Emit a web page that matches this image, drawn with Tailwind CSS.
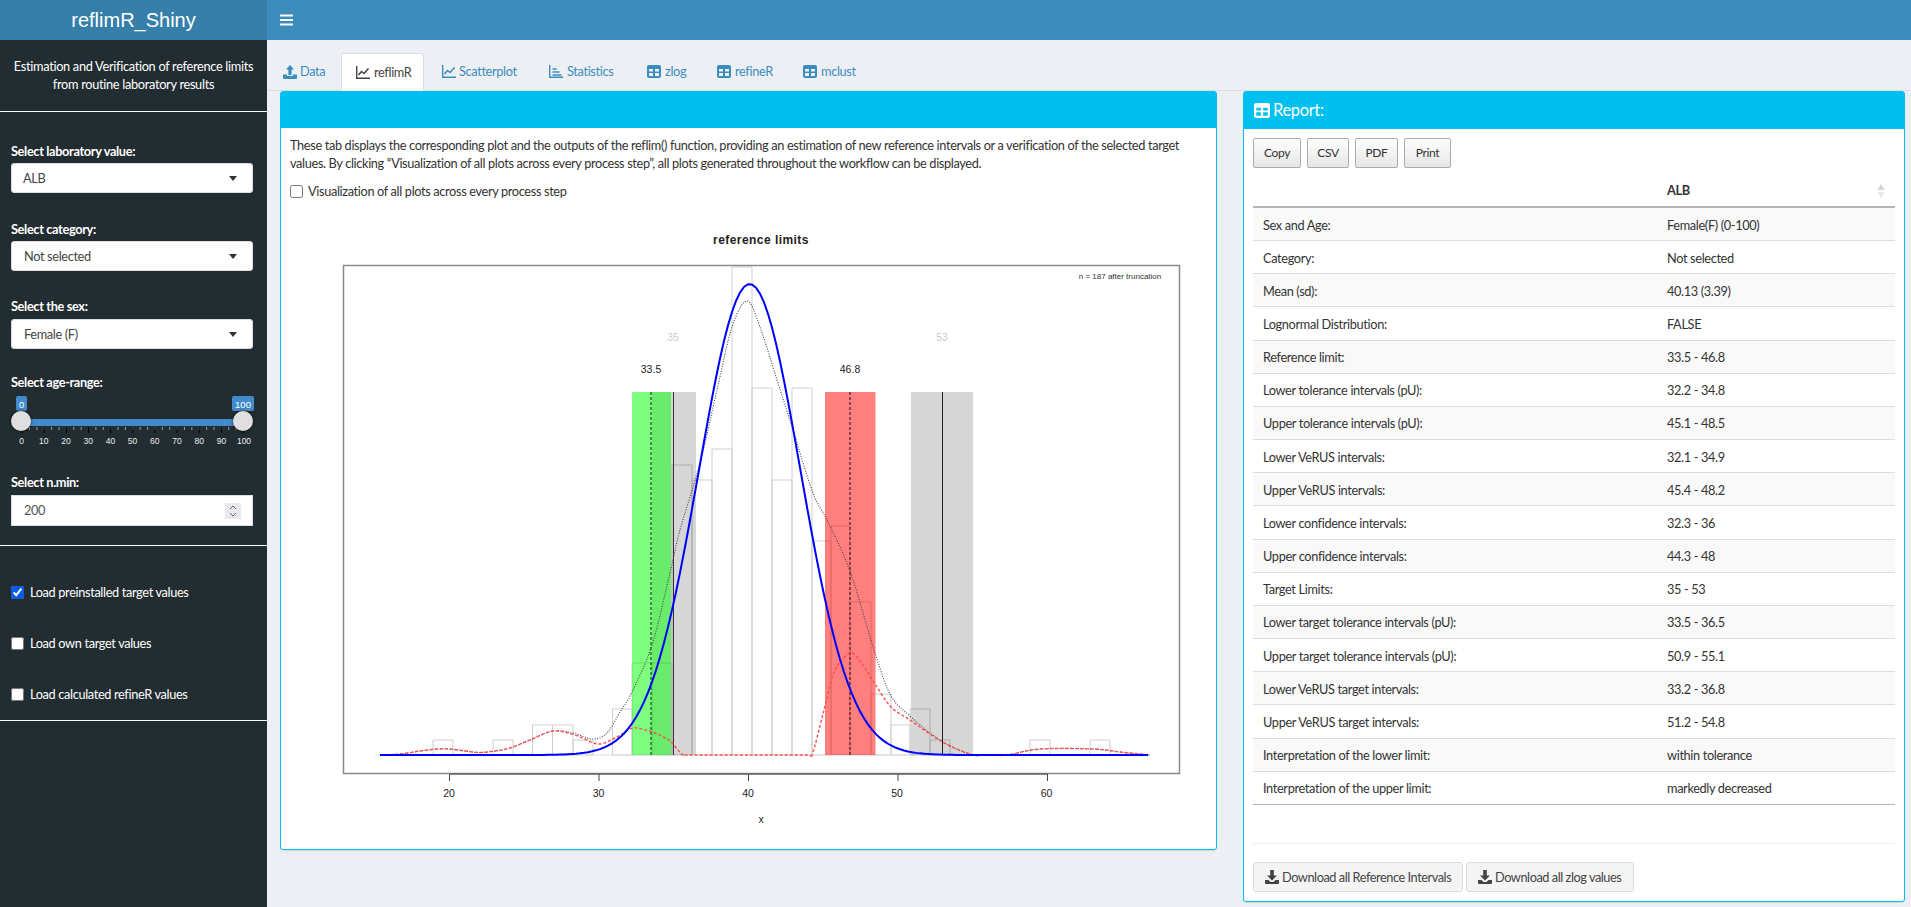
<!DOCTYPE html>
<html lang="en">
<head>
<meta charset="utf-8">
<title>reflimR_Shiny</title>
<script src="https://cdn.jsdelivr.net/npm/@tailwindcss/browser@4"></script>
</head>
<body class="m-0 bg-[#ecf0f5]">
<div class="flex w-[1911px] h-[907px] overflow-hidden font-['Lato',sans-serif] text-[12.75px] tracking-[-0.35px] text-[#333]">

  <!-- Sidebar -->
  <aside class="w-[267px] shrink-0 bg-[#222d32] flex flex-col text-white">
    <div class="h-[40px] bg-[#367fa9] flex items-center justify-center font-['Liberation_Sans',sans-serif] text-[20px] tracking-normal">reflimR_Shiny</div>
    <p class="mt-[17px] h-[36px] text-center leading-[18px] tracking-[-0.3px]">Estimation and Verification of reference limits<br>from routine laboratory results</p>
    <div class="mt-[18px] h-px bg-white"></div>

    <div class="px-[11px] flex flex-col">
      <div class="mt-[29px] h-[20px] leading-[20px] font-bold">Select laboratory value:</div>
      <div class="mt-[2px] w-[242px] h-[30px] pt-px bg-white rounded-[3px] border border-[#ddd] flex items-center justify-between pl-[11px] pr-[15px] text-[#444]">ALB<span class="w-0 h-0 border-x-[4px] border-x-transparent border-t-[5px] border-t-[#333]"></span></div>
      <div class="mt-[26px] h-[20px] leading-[20px] font-bold">Select category:</div>
      <div class="mt-[2px] w-[242px] h-[30px] pt-px bg-white rounded-[3px] border border-[#ddd] flex items-center justify-between pl-[12px] pr-[15px] text-[#444]">Not selected<span class="w-0 h-0 border-x-[4px] border-x-transparent border-t-[5px] border-t-[#333]"></span></div>
      <div class="mt-[25px] h-[20px] leading-[20px] font-bold">Select the sex:</div>
      <div class="mt-[3px] w-[242px] h-[30px] pt-px bg-white rounded-[3px] border border-[#ddd] flex items-center justify-between pl-[12px] pr-[15px] text-[#444]">Female (F)<span class="w-0 h-0 border-x-[4px] border-x-transparent border-t-[5px] border-t-[#333]"></span></div>
      <div class="mt-[23px] h-[20px] leading-[20px] font-bold">Select age-range:</div>
    </div>
    <svg width="267" height="61" viewBox="0 391 267 61" class="block shrink-0 font-['Liberation_Sans',sans-serif] tracking-normal">
      <defs>
        <filter id="hs" x="-40%" y="-40%" width="180%" height="180%"><feGaussianBlur stdDeviation="1.5"/></filter>
      </defs>
      <rect x="21" y="418" width="222" height="7" fill="#428bca"/>
      <line x1="21.6" x2="244" y1="427.5" y2="427.5" stroke="#8f9ba1" stroke-width="3" stroke-dasharray="1 6.38"/>
      <line x1="21.6" x2="244" y1="429" y2="429" stroke="#000" stroke-width="6" stroke-dasharray="1 21.14"/>
      <rect x="16" y="395" width="11" height="15" rx="2" fill="#428bca"/>
      <text x="21.6" y="406.5" text-anchor="middle" font-size="9.5" fill="#fff">0</text>
      <rect x="232" y="395" width="22" height="15" rx="2" fill="#428bca"/>
      <text x="243" y="406.5" text-anchor="middle" font-size="9.5" fill="#fff">100</text>
      <circle cx="21" cy="420" r="10.5" fill="#000" opacity=".5" filter="url(#hs)"/>
      <circle cx="243" cy="420" r="10.5" fill="#000" opacity=".5" filter="url(#hs)"/>
      <circle cx="21" cy="420" r="10" fill="#dfdfdf"/>
      <circle cx="243" cy="420" r="10" fill="#dfdfdf"/>
      <g font-size="8.5" fill="#e6ecef" text-anchor="middle">
        <text x="21.6" y="443">0</text><text x="43.8" y="443">10</text><text x="66" y="443">20</text><text x="88.2" y="443">30</text><text x="110.4" y="443">40</text><text x="132.6" y="443">50</text><text x="154.8" y="443">60</text><text x="177" y="443">70</text><text x="199.2" y="443">80</text><text x="221.4" y="443">90</text><text x="244" y="443">100</text>
      </g>
    </svg>
    <div class="px-[11px] flex flex-col">
      <div class="mt-[19px] h-[20px] leading-[20px] font-bold">Select n.min:</div>
      <div class="mt-[3px] w-[242px] h-[31px] pt-px bg-white border border-[#ddd] flex items-center justify-between pl-[12px] pr-[11px] text-[#555]">200
        <svg width="16" height="16" viewBox="0 0 16 16" class="block"><rect width="16" height="16" fill="#e8e8ed"/><path d="M5 6l3-3 3 3M5 10l3 3 3-3" fill="none" stroke="#666" stroke-width="1"/></svg>
      </div>
    </div>
    <div class="mt-[19px] h-px bg-white"></div>
    <div class="mt-[21px] flex flex-col px-[11px]">
      <label class="h-[51px] flex items-center gap-[6px]"><input type="checkbox" checked class="w-[13px] h-[13px] m-0 accent-[#0b5ce5]"><span>Load preinstalled target values</span></label>
      <label class="h-[51px] flex items-center gap-[6px]"><input type="checkbox" class="w-[13px] h-[13px] m-0"><span>Load own target values</span></label>
      <label class="h-[51px] flex items-center gap-[6px]"><input type="checkbox" class="w-[13px] h-[13px] m-0"><span>Load calculated refineR values</span></label>
    </div>
    <div class="mt-[0px] h-px bg-white"></div>
  </aside>

  <!-- Main -->
  <div class="flex-1 flex flex-col min-w-0">
    <header class="h-[40px] bg-[#3c8dbc] flex items-center pl-[13px] shrink-0">
      <svg width="14" height="12" viewBox="0 0 14 12"><path d="M0 1.5h13M0 6h13M0 10.5h13" stroke="#fff" stroke-width="2"/></svg>
    </header>

    <!-- Tabs -->
    <nav class="mt-[13px] h-[38px] shrink-0 border-b border-[#ddd] flex text-[#3c8dbc] pl-[1px]">
      <div class="w-[73px] h-[37px] flex items-center gap-[3px] pl-[15px]">
        <svg width="14" height="14" viewBox="0 0 14 14" fill="#3c8dbc"><path d="M7 0l4 4.5H8.6V10H5.4V4.5H3z"/><path d="M0 9.5h4V11h6V9.5h4V13a1 1 0 0 1-1 1H1a1 1 0 0 1-1-1z"/></svg>
        <span>Data</span>
      </div>
      <div class="w-[83px] h-[38px] bg-white rounded-t-[3px] border border-[#ddd] border-b-0 flex items-center gap-[4px] pl-[14px] text-[#444]">
        <svg width="14" height="13" viewBox="0 0 14 13" fill="none" stroke="#444" stroke-width="1.4"><path d="M.7 0v12.3H14"/><path d="M2.5 9l3-3.5 2.5 2 4.5-5" stroke-width="1.6"/></svg>
        <span>reflimR</span>
      </div>
      <div class="ml-[3px] w-[107px] h-[37px] flex items-center gap-[3px] pl-[15px]">
        <svg width="14" height="13" viewBox="0 0 14 13" fill="none" stroke="#3c8dbc" stroke-width="1.4"><path d="M.7 0v12.3H14"/><path d="M2.5 9l3-3.5 2.5 2 4.5-5" stroke-width="1.6"/></svg>
        <span>Scatterplot</span>
      </div>
      <div class="w-[98px] h-[37px] flex items-center gap-[4px] pl-[15px]">
        <svg width="14" height="13" viewBox="0 0 14 13" fill="none" stroke="#3c8dbc" stroke-width="1.4"><path d="M.7 0v12.3H14"/><path d="M3.5 4h4M3.5 7h7M3.5 10h9"/></svg>
        <span>Statistics</span>
      </div>
      <div class="w-[70px] h-[37px] flex items-center gap-[4px] pl-[15px]">
        <svg width="14" height="13" viewBox="0 0 14 13"><rect width="14" height="13" rx="2" fill="#3c8dbc"/><path d="M2 4h4v2.6H2zM8 4h4v2.6H8zM2 8h4v3H2zM8 8h4v3H8z" fill="#ecf0f5"/></svg>
        <span>zlog</span>
      </div>
      <div class="w-[86px] h-[37px] flex items-center gap-[4px] pl-[15px]">
        <svg width="14" height="13" viewBox="0 0 14 13"><rect width="14" height="13" rx="2" fill="#3c8dbc"/><path d="M2 4h4v2.6H2zM8 4h4v2.6H8zM2 8h4v3H2zM8 8h4v3H8z" fill="#ecf0f5"/></svg>
        <span>refineR</span>
      </div>
      <div class="w-[86px] h-[37px] flex items-center gap-[4px] pl-[15px]">
        <svg width="14" height="13" viewBox="0 0 14 13"><rect width="14" height="13" rx="2" fill="#3c8dbc"/><path d="M2 4h4v2.6H2zM8 4h4v2.6H8zM2 8h4v3H2zM8 8h4v3H8z" fill="#ecf0f5"/></svg>
        <span>mclust</span>
      </div>
    </nav>

    <div class="flex items-start pl-[13px]">
      <!-- Left box -->
      <section class="w-[937px] h-[759px] bg-white border border-[#00c0ef] rounded-[3px] shadow-[0_1px_1px_rgba(0,0,0,0.1)] flex flex-col">
        <div class="h-[36px] bg-[#00c0ef] shrink-0"></div>
        <p class="mt-[8px] pl-[9px] leading-[18px] whitespace-nowrap">These tab displays the corresponding plot and the outputs of the reflim() function, providing an estimation of new reference intervals or a verification of the selected target<br>values. By clicking “Visualization of all plots across every process step”, all plots generated throughout the workflow can be displayed.</p>
        <label class="mt-[10px] pl-[9px] h-[18px] flex items-center gap-[5px]"><input type="checkbox" class="w-[13px] h-[13px] m-0"><span class="pt-[2px]">Visualization of all plots across every process step</span></label>
        <svg width="935" height="640" viewBox="281 209 935 640" class="block shrink-0 mt-[9px] font-['Liberation_Sans',sans-serif] tracking-normal">
          <text x="761" y="244" text-anchor="middle" font-size="12" font-weight="700" fill="#222" letter-spacing=".45">reference limits</text>
          <!-- histogram -->
          <g fill="#fff" stroke="#cfcfcf" stroke-width="1">
            <path d="M433 755V740H453V755z M493 755V740H513V755z M532.500 755V725H552.500V755z M552.500 755V725H573V755z M573 755V740H593V755z M612.500 755V709H632V755z M632 755V663H652V755z M652 755V663H672V755z M672 755V465H692V755z M692 755V480H712V755z M712 755V449H732V755z M732 755V267H752V755z M752 755V388H772V755z M772 755V480H792V755z M792 755V388H812V755z M812 755V541H831V755z M831 755V526H850V755z M850 755V602H871V755z M871 755V694H891V755z M891 755V725H910V755z M910 755V709H930V755z M930 755V740H950V755z M1030 755V740H1050V755z M1090 755V740H1110V755z"/>
          </g>
          <line x1="375" x2="1150" y1="755" y2="755" stroke="#ddd"/>
          <!-- bands -->
          <rect x="652" y="392" width="44" height="363" fill="#000" fill-opacity=".16"/>
          <rect x="911" y="392" width="62" height="363" fill="#000" fill-opacity=".16"/>
          <rect x="632" y="392" width="39" height="363" fill="#0f0" fill-opacity=".5"/>
          <rect x="825" y="392" width="50.500" height="363" fill="#f00" fill-opacity=".5"/>
          <line x1="673.500" x2="673.500" y1="392" y2="755" stroke="#333" stroke-width="1"/>
          <line x1="942.500" x2="942.500" y1="392" y2="755" stroke="#222" stroke-width="1"/>
          <line x1="651" x2="651" y1="392" y2="755" stroke="#224422" stroke-width="1.2" stroke-dasharray="3 2"/>
          <line x1="850" x2="850" y1="392" y2="755" stroke="#442222" stroke-width="1.2" stroke-dasharray="3 2"/>
          <!-- curves -->
          <path id="gray" fill="none" stroke="#444" stroke-width="1.1" stroke-dasharray="1 1.500"/>
          <path id="red" fill="none" stroke="#ff4d4d" stroke-width="1.400" stroke-dasharray="3 2"/>
          <path id="blue" fill="none" stroke="#0000ff" stroke-width="2"/>
          <!-- frame -->
          <rect x="343.500" y="265.500" width="836" height="508" fill="none" stroke="#8a8a8a" stroke-width="1.500"/>
          <path d="M449.500 774V781M599 774V781M748.500 774V781M898 774V781M1047.500 774V781" stroke="#444"/>
          <line x1="449" x2="1048" y1="774" y2="774" stroke="#666" stroke-width="1.500"/>
          <g font-size="10.500" fill="#222" text-anchor="middle">
            <text x="449" y="797">20</text><text x="598.500" y="797">30</text><text x="748" y="797">40</text><text x="897" y="797">50</text><text x="1046.500" y="797">60</text>
            <text x="761" y="823">x</text>
            <text x="651" y="373">33.5</text>
            <text x="850" y="373">46.8</text>
            <text x="673" y="341" fill="#ccc">35</text>
            <text x="942" y="341" fill="#ccc">53</text>
          </g>
          <text x="1120" y="279" text-anchor="middle" font-size="8" fill="#333">n = 187 after truncation</text>
        </svg>
      </section>

      <!-- Right box -->
      <section class="ml-[26px] w-[662px] h-[811px] bg-white border border-[#00c0ef] rounded-[3px] shadow-[0_1px_1px_rgba(0,0,0,0.1)] flex flex-col shrink-0">
        <div class="h-[37px] bg-[#00c0ef] shrink-0 flex items-center pl-[10px] gap-[3px] text-white text-[16.500px]">
          <svg width="16" height="15" viewBox="0 0 14 13"><rect width="14" height="13" rx="2" fill="#fff"/><path d="M2 4h4v2.6H2zM8 4h4v2.6H8zM2 8h4v3H2zM8 8h4v3H8z" fill="#00c0ef"/></svg>
          <span>Report:</span>
        </div>
        <div class="px-[9px] flex flex-col">
          <div class="mt-[9px] flex gap-[6px] text-[12px] text-[#333]">
            <button class="w-[48px] h-[30px] border border-[#aaa] rounded-[2px] bg-linear-to-b from-white to-[#e6e6e6]">Copy</button>
            <button class="w-[42px] h-[30px] border border-[#aaa] rounded-[2px] bg-linear-to-b from-white to-[#e6e6e6]">CSV</button>
            <button class="w-[43px] h-[30px] border border-[#aaa] rounded-[2px] bg-linear-to-b from-white to-[#e6e6e6]">PDF</button>
            <button class="w-[47px] h-[30px] border border-[#aaa] rounded-[2px] bg-linear-to-b from-white to-[#e6e6e6]">Print</button>
          </div>
          <div class="mt-[9px] h-[31px] pb-[2px] flex items-center border-b-2 border-[#b5b5b5] font-bold">
            <span class="ml-[414px] flex-1">ALB</span>
            <svg width="8" height="16" viewBox="0 0 8 16" class="mr-[10px]"><path d="M4 1l3.500 6H.5z" fill="#d5d5d5"/><path d="M4 15l3.500-6H.5z" fill="#e8e8e8"/></svg>
          </div>
          <div class="flex flex-col">
            <div class="h-[33.170px] pt-[2px] flex items-center bg-[#f9f9f9] border-b border-[#ddd] pl-[10px]"><span class="w-[404px]">Sex and Age:</span><span>Female(F) (0-100)</span></div>
            <div class="h-[33.170px] pt-[2px] flex items-center border-b border-[#ddd] pl-[10px]"><span class="w-[404px]">Category:</span><span>Not selected</span></div>
            <div class="h-[33.170px] pt-[2px] flex items-center bg-[#f9f9f9] border-b border-[#ddd] pl-[10px]"><span class="w-[404px]">Mean (sd):</span><span>40.13 (3.39)</span></div>
            <div class="h-[33.170px] pt-[2px] flex items-center border-b border-[#ddd] pl-[10px]"><span class="w-[404px]">Lognormal Distribution:</span><span>FALSE</span></div>
            <div class="h-[33.170px] pt-[2px] flex items-center bg-[#f9f9f9] border-b border-[#ddd] pl-[10px]"><span class="w-[404px]">Reference limit:</span><span>33.5 - 46.8</span></div>
            <div class="h-[33.170px] pt-[2px] flex items-center border-b border-[#ddd] pl-[10px]"><span class="w-[404px]">Lower tolerance intervals (pU):</span><span>32.2 - 34.8</span></div>
            <div class="h-[33.170px] pt-[2px] flex items-center bg-[#f9f9f9] border-b border-[#ddd] pl-[10px]"><span class="w-[404px]">Upper tolerance intervals (pU):</span><span>45.1 - 48.5</span></div>
            <div class="h-[33.170px] pt-[2px] flex items-center border-b border-[#ddd] pl-[10px]"><span class="w-[404px]">Lower VeRUS intervals:</span><span>32.1 - 34.9</span></div>
            <div class="h-[33.170px] pt-[2px] flex items-center bg-[#f9f9f9] border-b border-[#ddd] pl-[10px]"><span class="w-[404px]">Upper VeRUS intervals:</span><span>45.4 - 48.2</span></div>
            <div class="h-[33.170px] pt-[2px] flex items-center border-b border-[#ddd] pl-[10px]"><span class="w-[404px]">Lower confidence intervals:</span><span>32.3 - 36</span></div>
            <div class="h-[33.170px] pt-[2px] flex items-center bg-[#f9f9f9] border-b border-[#ddd] pl-[10px]"><span class="w-[404px]">Upper confidence intervals:</span><span>44.3 - 48</span></div>
            <div class="h-[33.170px] pt-[2px] flex items-center border-b border-[#ddd] pl-[10px]"><span class="w-[404px]">Target Limits:</span><span>35 - 53</span></div>
            <div class="h-[33.170px] pt-[2px] flex items-center bg-[#f9f9f9] border-b border-[#ddd] pl-[10px]"><span class="w-[404px]">Lower target tolerance intervals (pU):</span><span>33.5 - 36.5</span></div>
            <div class="h-[33.170px] pt-[2px] flex items-center border-b border-[#ddd] pl-[10px]"><span class="w-[404px]">Upper target tolerance intervals (pU):</span><span>50.9 - 55.1</span></div>
            <div class="h-[33.170px] pt-[2px] flex items-center bg-[#f9f9f9] border-b border-[#ddd] pl-[10px]"><span class="w-[404px]">Lower VeRUS target intervals:</span><span>33.2 - 36.8</span></div>
            <div class="h-[33.170px] pt-[2px] flex items-center border-b border-[#ddd] pl-[10px]"><span class="w-[404px]">Upper VeRUS target intervals:</span><span>51.2 - 54.8</span></div>
            <div class="h-[33.170px] pt-[2px] flex items-center bg-[#f9f9f9] border-b border-[#ddd] pl-[10px]"><span class="w-[404px]">Interpretation of the lower limit:</span><span>within tolerance</span></div>
            <div class="h-[33.170px] pt-[2px] flex items-center border-b border-[#b5b5b5] pl-[10px]"><span class="w-[404px]">Interpretation of the upper limit:</span><span>markedly decreased</span></div>
          </div>
          <div class="mt-[38px] h-px bg-[#f0f0f0]"></div>
          <div class="mt-[18px] flex gap-[3px]">
            <div class="w-[210px] h-[30px] bg-[#f4f4f4] border border-[#ddd] rounded-[3px] flex items-center gap-[3px] pl-[11px] text-[#444] whitespace-nowrap tracking-[-0.45px]">
              <svg width="14" height="14" viewBox="0 0 14 14" fill="#444"><path d="M5.200 0h3.600v5.500H12L7 10.500 2 5.500h3.200z"/><path d="M0 10h3.500L5.500 12h3l2-2H14v3a1 1 0 0 1-1 1H1a1 1 0 0 1-1-1z"/></svg>
              <span class="pt-[2px]">Download all Reference Intervals</span>
            </div>
            <div class="w-[168px] h-[30px] bg-[#f4f4f4] border border-[#ddd] rounded-[3px] flex items-center gap-[3px] pl-[11px] text-[#444] whitespace-nowrap tracking-[-0.45px]">
              <svg width="14" height="14" viewBox="0 0 14 14" fill="#444"><path d="M5.200 0h3.600v5.500H12L7 10.500 2 5.500h3.200z"/><path d="M0 10h3.500L5.500 12h3l2-2H14v3a1 1 0 0 1-1 1H1a1 1 0 0 1-1-1z"/></svg>
              <span class="pt-[2px]">Download all zlog values</span>
            </div>
          </div>
        </div>
      </section>
    </div>
  </div>
</div>
<script>
  function smooth(p){
    var d='M'+p[0][0]+' '+p[0][1];
    for(var i=0;i<p.length-1;i++){
      var a=p[i-1]||p[i],b=p[i],c=p[i+1],e=p[i+2]||c;
      d+='C'+(b[0]+(c[0]-a[0])/6)+' '+(b[1]+(c[1]-a[1])/6)+' '+(c[0]-(e[0]-b[0])/6)+' '+(c[1]-(e[1]-b[1])/6)+' '+c[0]+' '+c[1];
    }
    return d;
  }
  var blue=[];
  for(var x=380;x<=1150;x+=4){
    var z=(x-749.7)/50.6;
    blue.push((x===380?'M':'L')+x+' '+(755-471*Math.exp(-z*z/2)).toFixed(2));
  }
  document.getElementById('blue').setAttribute('d',blue.join(''));
  var left=[[380,755],[400,754],[420,751],[437,749],[450,749],[465,751],[480,752.5],[495,751],[510,748],[530,740],[553,731]];
  var right=[[950,746],[973,755],[985,755],[1007,755],[1040,749],[1093,749],[1120,752],[1150,755]];
  document.getElementById('red').setAttribute('d',smooth(left.concat([[575,735],[598,744],[615,738],[630,729],[637,728],[655,733],[670,741],[678,750],[683,755],[690,755],[750,755],[806,755],[812,755],[823,714],[833,675],[842,660],[852,653],[863,665],[875,684],[891,707],[910,720],[930,734]],right)));
  document.getElementById('gray').setAttribute('d',smooth(left.concat([[573,733],[593,739],[607,733],[620,712],[632,692],[652,645],[670,573],[680,530],[700,463],[717,390],[732,327],[747,301],[760,327],[777,380],[793,430],[813,493],[827,520],[850,571],[875,653],[891,696],[910,716],[930,733]],right)));
</script>
</body>
</html>
